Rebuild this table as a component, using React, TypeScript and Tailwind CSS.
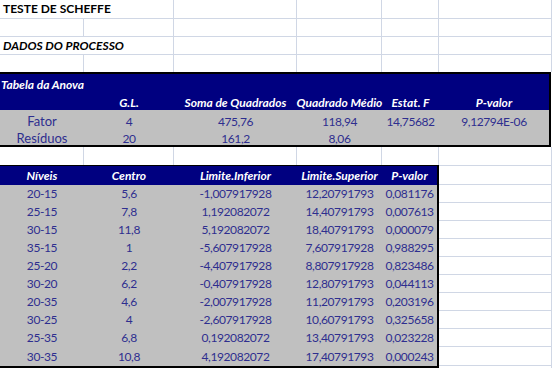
import React from "react";

const G = "border-[#D0D7E5]";
const widths = ["w-[84px]", "w-[90px]", "w-[123px]", "w-[85px]", "w-[57px]", "w-[113px]"];

const anovaHead = ["", "G.L.", "Soma de Quadrados", "Quadrado Médio", "Estat. F", "P-valor"];
const anovaRows = [
  ["Fator", "4", "475,76", "118,94", "14,75682", "9,12794E-06"],
  ["Resíduos", "20", "161,2", "8,06", "", ""],
];
const t1w = ["w-[84px]", "w-[90px]", "w-[123px]", "w-[85px]", "w-[57px]", "w-[110px]"];
const t2w = ["w-[84px]", "w-[90px]", "w-[123px]", "w-[85px]", "w-[55px]"];
const head2 = ["Níveis", "Centro", "Limite.Inferior", "Limite.Superior", "P-valor"];
const rows2 = [
  ["20-15", "5,6", "-1,007917928", "12,20791793", "0,081176"],
  ["25-15", "7,8", "1,192082072", "14,40791793", "0,007613"],
  ["30-15", "11,8", "5,192082072", "18,40791793", "0,000079"],
  ["35-15", "1", "-5,607917928", "7,607917928", "0,988295"],
  ["25-20", "2,2", "-4,407917928", "8,807917928", "0,823486"],
  ["30-20", "6,2", "-0,407917928", "12,80791793", "0,044113"],
  ["20-35", "4,6", "-2,007917928", "11,20791793", "0,203196"],
  ["30-25", "4", "-2,607917928", "10,60791793", "0,325658"],
  ["25-35", "6,8", "0,192082072", "13,40791793", "0,023228"],
  ["30-35", "10,8", "4,192082072", "17,40791793", "0,000243"],
];

const NUM = "text-[12px] tracking-[-0.4px]";
const WORD = "text-[13px]";

function GridRow({ h, merged, text, italic, bottom }: { h: string; merged?: boolean; text?: string; italic?: boolean; bottom?: boolean }) {
  return (
    <div className={`flex ${h} ${bottom ? `border-b ${G}` : ""}`}>
      {merged ? (
        <div className={`w-[174px] border-r ${G} flex items-center pl-[3px] font-bold text-[12px] text-black whitespace-nowrap ${italic ? "italic" : ""}`}>
          {text}
        </div>
      ) : (
        <>
          <div className={`${widths[0]} border-r ${G}`} />
          <div className={`${widths[1]} border-r ${G}`} />
        </>
      )}
      {widths.slice(2).map((w, i) => (
        <div key={i} className={`${w} border-r ${G}`} />
      ))}
    </div>
  );
}

export default function App() {
  return (
    <div className="w-[552px] h-[368px] overflow-hidden bg-white font-[Lato,sans-serif] leading-none">
      <GridRow h="h-[19px]" merged text="TESTE DE SCHEFFE" bottom />
      <GridRow h="h-[18px]" bottom />
      <GridRow h="h-[18px]" merged text="DADOS DO PROCESSO" italic bottom />
      <GridRow h="h-[17px]" />

      {/* ANOVA table */}
      <div className="w-[551px] border-t-2 border-b-2 border-r-2 border-black">
        <div className="h-[18px] bg-[#000080] flex items-end pb-[1px] pl-[1px] text-white font-bold italic text-[12px] whitespace-nowrap">
          Tabela da Anova
        </div>
        <div className="h-[18px] bg-[#000080] flex">
          {anovaHead.map((t, i) => (
            <div key={i} className={`${t1w[i]} flex items-end justify-center pb-[1px] text-white font-bold italic text-[12px] whitespace-nowrap`}>
              {t}
            </div>
          ))}
        </div>
        {anovaRows.map((r, ri) => (
          <div key={ri} className={`${ri === 0 ? "h-[18px]" : "h-[17px]"} bg-[#C0C0C0] flex`}>
            {r.map((t, i) => (
              <div key={i} className={`${t1w[i]} flex items-end justify-center pb-0 text-[#2E2E8F] ${i === 0 ? WORD : NUM} whitespace-nowrap`}>
                {t}
              </div>
            ))}
          </div>
        ))}
      </div>

      {/* blank row */}
      <div className="flex h-[18px]">
        {widths.map((w, i) => (
          <div key={i} className={`${w} border-r ${G}`} />
        ))}
      </div>

      {/* Scheffe table + right column */}
      <div className="flex">
        <div className="w-[439px] border-t border-r-2 border-b-2 border-black">
          <div className="h-[19px] bg-[#000080] flex">
            {head2.map((t, i) => (
              <div key={i} className={`${t2w[i]} flex items-end justify-center pb-[3px] text-white font-bold italic text-[12px] whitespace-nowrap`}>
                {t}
              </div>
            ))}
          </div>
          {rows2.map((r, ri) => (
            <div key={ri} className={`${ri === rows2.length - 1 ? "h-[19px]" : "h-[18px]"} bg-[#C0C0C0] flex`}>
              {r.map((t, i) => (
                <div key={i} className={`${t2w[i]} flex items-center justify-center text-[#2E2E8F] ${NUM} whitespace-nowrap`}>
                  {t}
                </div>
              ))}
            </div>
          ))}
        </div>
        <div className={`w-[113px] border-t border-r ${G}`}>
          <div className={`h-[19px] border-b ${G}`} />
          {rows2.map((_, i) => (
            <div key={i} className={`${i === rows2.length - 1 ? "h-[19px]" : "h-[18px]"} border-b ${G}`} />
          ))}
        </div>
      </div>
    </div>
  );
}
